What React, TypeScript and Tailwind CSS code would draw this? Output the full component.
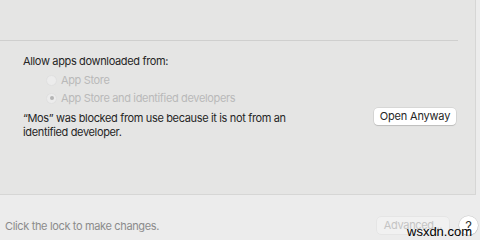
import React from "react";

export default function App() {
  return (
    <div
      className="relative w-[480px] h-[240px] overflow-hidden bg-[#ececec] text-[#262626] text-[11px] leading-[14px] tracking-[-0.35px]"
      style={{ fontFamily: "Inter, 'Liberation Sans', sans-serif" }}
    >
      <div className="w-[476px] h-[195px] bg-[#e5e5e4] border-r border-b border-[#d6d6d5] flex flex-col">
        <div className="mt-[40px] w-[458px] h-px bg-[#cfcfce]" />
        <div className="pl-[23px] pt-[13px] flex flex-col">
          <div>Allow apps downloaded from:</div>
          <div className="pl-[23px] mt-[5px] flex flex-col gap-[4px] text-[#b9b9b9]">
            <div className="flex items-center gap-[4px] h-[14px]">
              <span className="w-[11px] h-[11px] rounded-full bg-[#ececec] border border-[#e0e0e0]" />
              <span>App Store</span>
            </div>
            <div className="flex items-center gap-[4px] h-[14px]">
              <span className="w-[11px] h-[11px] rounded-full bg-[#ececec] border border-[#e0e0e0] flex items-center justify-center">
                <span className="w-[4px] h-[4px] rounded-full bg-[#b5b5b5]" />
              </span>
              <span>App Store and identified developers</span>
            </div>
          </div>
          <div className="mt-[6px] flex items-start pr-[19px]">
            <div className="w-[280px]">
              “Mos” was blocked from use because it is not from an identified developer.
            </div>
            <button className="ml-auto mt-[-3px] h-[17px] w-[82px] rounded-[4px] bg-white text-[#262626] text-[11px] leading-[17px] tracking-[-0.2px] shadow-[0_0_0_0.5px_rgba(0,0,0,0.12),0_1px_1px_rgba(0,0,0,0.12)]">
              Open Anyway
            </button>
          </div>
        </div>
      </div>
      <div className="flex items-center h-[19px] mt-[21px] pl-[5px]">
        <span className="text-[#8b8b8b]">Click the lock to make changes.</span>
        <button className="ml-auto h-[17px] w-[72px] rounded-[4px] bg-[#f1f1f1] text-[#c4c4c4] text-[11px] leading-[17px] shadow-[0_0_0_0.5px_rgba(0,0,0,0.06)]">
          Advanced...
        </button>
        <span className="ml-[10px] mr-[2px] w-[19px] h-[19px] rounded-full bg-white shadow-[0_0_0_0.5px_rgba(0,0,0,0.15),0_1px_1px_rgba(0,0,0,0.1)] flex items-center justify-center text-[13px] text-[#333] tracking-normal">
          ?
        </span>
      </div>
      <div
        className="absolute left-[407px] top-[225px] text-[13px] leading-[13px] text-black tracking-normal"
        style={{ fontFamily: "'Liberation Sans', Arial, sans-serif" }}
      >
        wsxdn.com
      </div>
    </div>
  );
}
